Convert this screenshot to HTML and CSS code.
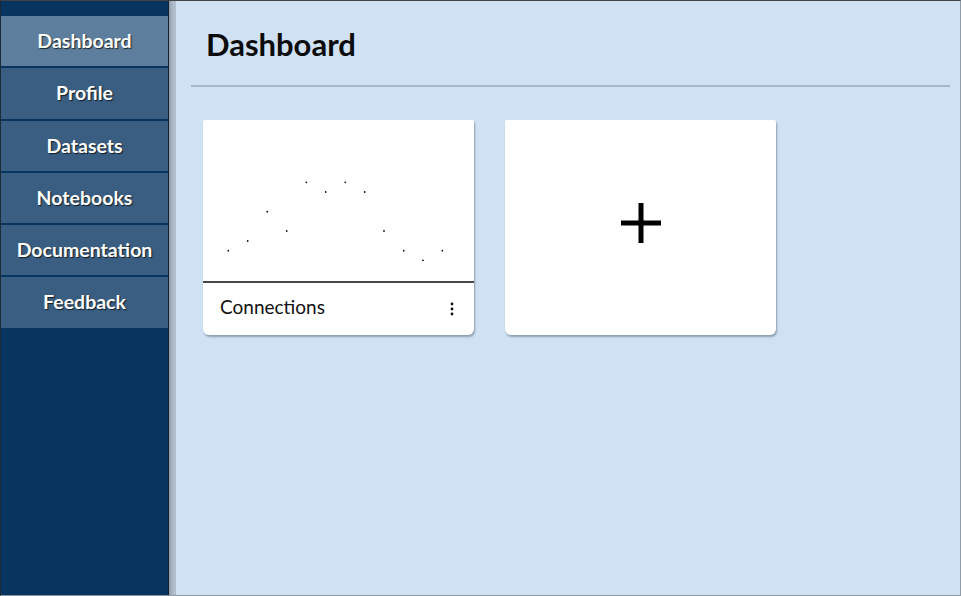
FILE: index.html
```html
<!DOCTYPE html>
<html>
<head>
<meta charset="utf-8">
<link rel="stylesheet" href="styles.css">
</head>
<body>
<div class="frame">
  <nav class="sidebar">
    <a class="nav-item active">Dashboard</a>
    <a class="nav-item">Profile</a>
    <a class="nav-item">Datasets</a>
    <a class="nav-item">Notebooks</a>
    <a class="nav-item">Documentation</a>
    <a class="nav-item">Feedback</a>
  </nav>
  <div class="gutter"></div>
  <main class="main">
    <h1 class="title">Dashboard</h1>
    <div class="rule"></div>
    <div class="cards">
      <div class="card">
        <div class="chart">
          <svg width="271" height="161" viewBox="0 0 271 161">
            <g fill="#111">
              <circle cx="25.3" cy="130.7" r="0.9"/>
              <circle cx="44.7" cy="121" r="0.9"/>
              <circle cx="64.3" cy="91.7" r="0.9"/>
              <circle cx="83.7" cy="111" r="0.9"/>
              <circle cx="103.3" cy="62.3" r="0.9"/>
              <circle cx="122.7" cy="72" r="0.9"/>
              <circle cx="142.3" cy="62.3" r="0.9"/>
              <circle cx="161.7" cy="72" r="0.9"/>
              <circle cx="181" cy="111" r="0.9"/>
              <circle cx="200.7" cy="130.7" r="0.9"/>
              <circle cx="220" cy="140.3" r="0.9"/>
              <circle cx="239.3" cy="130.7" r="0.9"/>
            </g>
          </svg>
        </div>
        <div class="card-footer">
          <span class="card-name">Connections</span>
          <svg class="kebab" width="4" height="14" viewBox="0 0 4 14">
            <circle cx="2" cy="2" r="1.4" fill="#111"/>
            <circle cx="2" cy="7" r="1.4" fill="#111"/>
            <circle cx="2" cy="12" r="1.4" fill="#111"/>
          </svg>
        </div>
      </div>
      <div class="card add-card">
        <svg width="40" height="40" viewBox="0 0 40 40">
          <path d="M20 0 V40 M0 20 H40" stroke="#000" stroke-width="5" fill="none"/>
        </svg>
      </div>
    </div>
  </main>
</div>
</body>
</html>
```
FILE: styles.css
```css
html, body {
  margin: 0;
  padding: 0;
}
body {
  font-family: Lato, "Open Sans", sans-serif;
}
.frame {
  width: 961px;
  height: 596px;
  box-sizing: border-box;
  display: flex;
  border-top: 1px solid #3f4247;
  border-left: 1px solid #1d2a38;
  border-right: 1px solid #8f9ca8;
  border-bottom: 1px solid #8f9ca8;
  overflow: hidden;
}
.sidebar {
  width: 167px;
  flex: none;
  background: #07355f;
  border-right: 1px solid #14212e;
  padding-top: 15px;
  display: flex;
  flex-direction: column;
}
.nav-item {
  display: block;
  height: 50.3px;
  line-height: 50.3px;
  margin-bottom: 2px;
  background: #3a5e82;
  color: #fff;
  text-align: center;
  font-weight: 700;
  font-size: 19.5px;
  text-shadow: 1px 1px 1px rgba(0, 0, 0, 0.7);
}
.nav-item.active {
  background: #5d7e9c;
}
.gutter {
  width: 7px;
  flex: none;
  background: linear-gradient(to right, #8c98a4, #a7b5c3 40%, #b3c2d1);
}
.main {
  flex: 1;
  background: #cfe1f2;
  padding: 25px 10px 0 15px;
}
.title {
  margin: 0;
  padding-left: 15px;
  font-size: 31px;
  line-height: 37px;
  font-weight: 700;
  color: #0b0b0b;
}
.rule {
  height: 2px;
  background: #a7b7c8;
  margin-top: 22px;
}
.cards {
  display: flex;
  gap: 31px;
  margin-top: 33px;
  padding-left: 12px;
}
.card {
  width: 271px;
  height: 215px;
  background: #fff;
  border-radius: 2px 2px 6px 6px;
  box-shadow: 1px 2px 2px rgba(60, 80, 100, 0.45);
  display: flex;
  flex-direction: column;
}
.chart {
  height: 161px;
  border-bottom: 2px solid #474747;
}
.chart svg {
  display: block;
}
.card-footer {
  flex: 1;
  display: flex;
  align-items: flex-start;
  justify-content: space-between;
  padding: 0 20px 0 17px;
}
.card-name {
  font-size: 19px;
  line-height: 48px;
  color: #111;
}
.kebab {
  margin-top: 19px;
}
.add-card {
  align-items: center;
  justify-content: center;
}
.add-card svg {
  display: block;
  margin-top: -10px;
}
```
